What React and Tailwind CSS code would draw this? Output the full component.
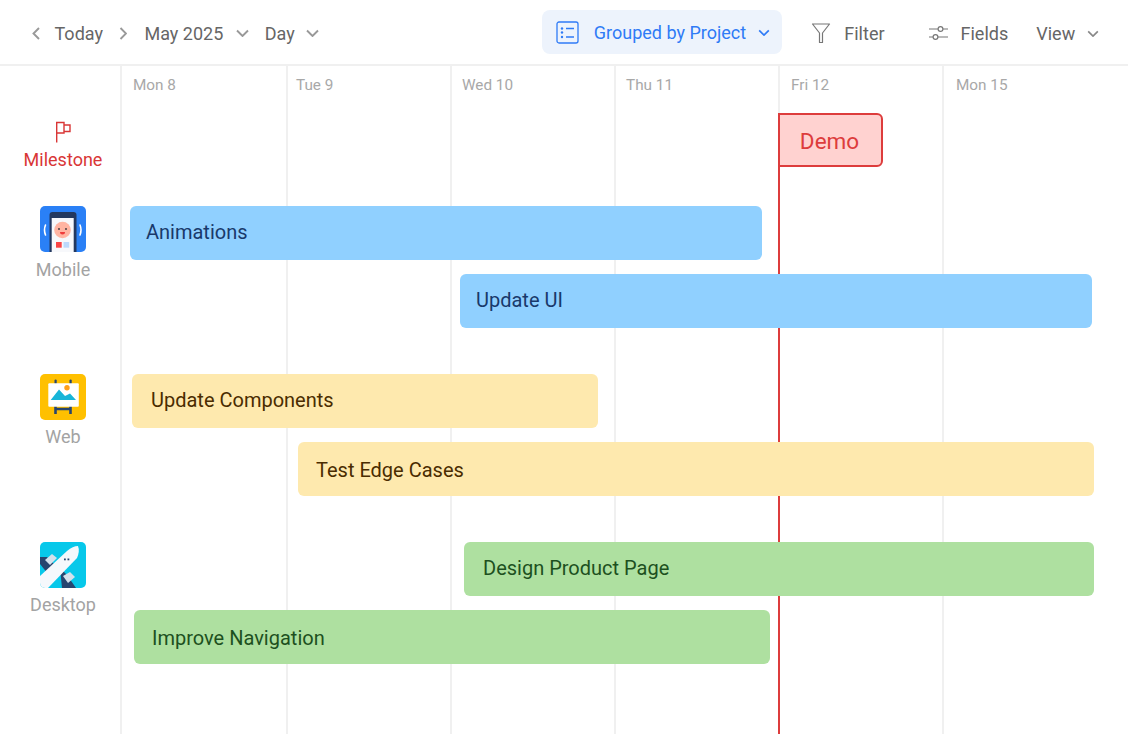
import React from "react"

const DAYS = [
  { label: "Mon 8", width: "w-[166px]", pad: "pl-[11px]" },
  { label: "Tue 9", width: "w-[164px]", pad: "pl-[8px]" },
  { label: "Wed 10", width: "w-[164px]", pad: "pl-[10px]" },
  { label: "Thu 11", width: "w-[164px]", pad: "pl-[10px]" },
  { label: "Fri 12", width: "w-[164px]", pad: "pl-[11px]" },
  { label: "Mon 15", width: "flex-1", pad: "pl-[12px]", last: true },
]

function Chevron({ dir = "down", className = "" }) {
  const paths = {
    down: "M1 1.5 L6.5 7 L12 1.5",
    left: "M7 1 L1.5 6.5 L7 12",
    right: "M1.5 1 L7 6.5 L1.5 12",
  }
  const box = dir === "down" ? "0 0 13 8" : "0 0 8.5 13"
  return (
    <svg viewBox={box} fill="none" stroke="currentColor" strokeWidth="1.9" className={className}>
      <path d={paths[dir]} />
    </svg>
  )
}

function ListIcon() {
  return (
    <svg viewBox="0 0 23 23" fill="none" stroke="#2f7bf6" strokeWidth="1.3" className="w-[23px] h-[23px]">
      <rect x="1" y="1" width="21" height="21" rx="2" />
      <circle cx="6" cy="7.5" r="1.2" fill="#2f7bf6" stroke="none" />
      <circle cx="6" cy="11.5" r="1.2" fill="#2f7bf6" stroke="none" />
      <circle cx="6" cy="16" r="1.2" fill="#2f7bf6" stroke="none" />
      <path d="M10 7.5h8M10 16h8" />
    </svg>
  )
}

function FilterIcon() {
  return (
    <svg viewBox="0 0 20 22" fill="none" stroke="#777" strokeWidth="1.2" className="w-[20px] h-[22px]">
      <path d="M1.5 2 H18.5 L11.5 11 V20.5 H8.5 V11 Z" strokeLinejoin="round" />
    </svg>
  )
}

function FieldsIcon() {
  return (
    <svg viewBox="0 0 21 20" fill="none" stroke="#777" strokeWidth="1.2" className="w-[21px] h-[20px]">
      <path d="M1 6h9M15 6h5M1 14h4M10 14h10" />
      <circle cx="12.5" cy="6" r="2.4" />
      <circle cx="7.5" cy="14" r="2.4" />
    </svg>
  )
}

function FlagIcon() {
  return (
    <svg viewBox="0 0 16 22" fill="none" stroke="#d93636" strokeWidth="1.4" className="w-[16px] h-[22px]">
      <path d="M1.700 21.500 V1.500 H9 V12 H1.700" />
      <path d="M9 4 H15 V10.500 H9" />
    </svg>
  )
}

function MobileIcon() {
  return (
    <svg viewBox="0 0 46 46" className="w-[46px] h-[46px] rounded-[5px]">
      <rect width="46" height="46" fill="#2a80f6" />
      <path d="M9.500 46V9a3 3 0 0 1 3-3h21a3 3 0 0 1 3 3v37Z" fill="#23385f" />
      <rect x="11.700" y="12" width="22" height="34" fill="#f7f8fb" />
      <circle cx="22.500" cy="24" r="8.300" fill="#ffb4a2" />
      <circle cx="19" cy="23" r="0.900" fill="#33333a" />
      <circle cx="26" cy="23" r="0.900" fill="#33333a" />
      <path d="M20 26h5a2.500 2.500 0 0 1-5 0Z" fill="#ef3b3b" />
      <rect x="16" y="36" width="5.700" height="5.700" fill="#f94444" />
      <rect x="23.500" y="36" width="5.700" height="5.700" fill="#bcd9fb" />
      <path d="M5.500 19q-2 5 0 10M40 19q2 5 0 10" fill="none" stroke="#fff" strokeWidth="1.600" strokeLinecap="round" />
    </svg>
  )
}

function WebIcon() {
  return (
    <svg viewBox="0 0 46 46" className="w-[46px] h-[46px] rounded-[5px]">
      <rect width="46" height="46" fill="#ffc000" />
      <path d="M15.500 32v8M30.500 32v8M15.500 35h15" stroke="#27456f" strokeWidth="2.600" fill="none" />
      <rect x="14.500" y="5.500" width="2.200" height="5" rx="1" fill="#27456f" />
      <rect x="29.500" y="5.500" width="2.200" height="5" rx="1" fill="#27456f" />
      <rect x="8.300" y="9.300" width="30.500" height="23.400" rx="1" fill="#fff" />
      <circle cx="27" cy="13.700" r="2.700" fill="#ff9f1a" />
      <path d="M10.700 26L19 15.500L25 22L30 19.500L36 26Z" fill="#18b5d8" />
    </svg>
  )
}

function DesktopIcon() {
  return (
    <svg viewBox="0 0 46 46" className="w-[46px] h-[46px] rounded-[5px]">
      <rect width="46" height="46" fill="#07c8ea" />
      <path d="M0 15H7L18 26L8 32L0 22Z" fill="#27456f" />
      <path d="M20 26L27 33L36 46H22Z" fill="#27456f" />
      <path d="M0 34L27 9Q33 4 38 4Q40 9 37 16L8 46H0Z" fill="#f5f8fc" />
      <path d="M5 18L12 12L17 16L10 23Z" fill="#d5e1ec" />
      <path d="M23 34L30 30L35 35L28 41Z" fill="#d5e1ec" />
      <rect x="24" y="16.500" width="1.800" height="1.800" fill="#27456f" />
      <rect x="27.500" y="16.500" width="1.800" height="1.800" fill="#27456f" />
    </svg>
  )
}

function Toolbar() {
  return (
    <div className="flex items-center h-[66px] pt-[2px] border-b-2 border-[#f0f0f0] text-[18px] text-[#666666] shrink-0">
      <Chevron dir="left" className="w-[8.500px] h-[13px] ml-[32px] text-[#999999]" />
      <span className="ml-[14px]">Today</span>
      <Chevron dir="right" className="w-[8.500px] h-[13px] ml-[16px] text-[#999999]" />
      <span className="ml-[17px]">May 2025</span>
      <Chevron className="w-[13px] h-[8px] ml-[13px] text-[#999999]" />
      <span className="ml-[15.500px]">Day</span>
      <Chevron className="w-[13px] h-[8px] ml-[11.500px] text-[#999999]" />
      <div className="flex items-center h-[44px] w-[240px] ml-[223px] -mt-[2px] pl-[14px] pt-[1px] rounded-lg bg-[#edf3fc] text-[#2f7bf6]">
        <ListIcon />
        <span className="ml-[14.500px]">Grouped by Project</span>
        <Chevron className="w-[12px] h-[7px] ml-[11.500px]" />
      </div>
      <div className="ml-[29px]"><FilterIcon /></div>
      <span className="ml-[13px]">Filter</span>
      <div className="ml-[43px]"><FieldsIcon /></div>
      <span className="ml-[12px]">Fields</span>
      <span className="ml-[28px]">View</span>
      <Chevron className="w-[12px] h-[7px] ml-[12px] text-[#888888]" />
    </div>
  )
}

function GroupLabel({ icon, label, className }) {
  return (
    <div className={`flex flex-col items-center ${className}`}>
      {icon}
      <span className="text-[18px] leading-[22px] text-[#a3a3a3]">{label}</span>
    </div>
  )
}

function Sidebar() {
  return (
    <div className="w-[122px] shrink-0 border-r-2 border-[#f0f0f0] pl-[6px]">
      <div className="flex flex-col items-center mt-[55px]">
        <FlagIcon />
        <span className="text-[18px] leading-[22px] text-[#d93636] mt-[6px]">Milestone</span>
      </div>
      <GroupLabel icon={<MobileIcon />} label="Mobile" className="mt-[35px] gap-[7px]" />
      <GroupLabel icon={<WebIcon />} label="Web" className="mt-[93px] gap-[6px]" />
      <GroupLabel icon={<DesktopIcon />} label="Desktop" className="mt-[94px] gap-[6px]" />
    </div>
  )
}

function Bar({ label, className }) {
  return (
    <div className={`flex items-center h-[54px] shrink-0 rounded-md text-[20px] ${className}`}>
      {label}
    </div>
  )
}

function Timeline() {
  return (
    <div className="relative flex-1 min-w-0">
      {/* grid columns sit behind the bars */}
      <div className="absolute inset-0 flex">
        {DAYS.map(d => (
          <div
            key={d.label}
            className={`${d.width} ${d.pad} ${d.last ? "" : "border-r-2 border-[#f0f0f0]"} pt-[8px] text-[15.300px] leading-[22px] text-[#a8a8a8]`}
          >
            {d.label}
          </div>
        ))}
      </div>

      {/* today marker */}
      <div className="absolute left-[656px] top-[48px] bottom-0 w-[2px] bg-[#dd3c3c]" />

      <div className="relative flex flex-col">
        <div className="flex items-center justify-center ml-[656px] mt-[47px] w-[105px] h-[54px] pt-[3px] pr-[2px] bg-[#ffd2d0] border-2 border-[#dd3c3c] rounded-r-md text-[22.500px] text-[#dd3c3c]">
          Demo
        </div>
        <Bar label="Animations" className="ml-[8px] mt-[39px] w-[632px] pl-[16px] pb-[2px] bg-[#90d0ff] text-[#19396b]" />
        <Bar label="Update UI" className="ml-[338px] mt-[14px] w-[632px] pl-[16px] pb-[2px] bg-[#90d0ff] text-[#19396b]" />
        <Bar label="Update Components" className="ml-[10px] mt-[46px] w-[466px] pl-[19px] pb-[2px] bg-[#fee9ae] text-[#4a2c00]" />
        <Bar label="Test Edge Cases" className="ml-[176px] mt-[14px] w-[796px] pl-[18px] pt-[2px] bg-[#fee9ae] text-[#4a2c00]" />
        <Bar label="Design Product Page" className="ml-[342px] mt-[46px] w-[630px] pl-[19px] pb-[2px] bg-[#aee0a0] text-[#1d5020]" />
        <Bar label="Improve Navigation" className="ml-[12px] mt-[14px] w-[636px] pl-[18px] pt-[2px] bg-[#aee0a0] text-[#1d5020]" />
      </div>
    </div>
  )
}

export default function App() {
  return (
    <div className="flex flex-col h-[734px] w-[1128px] overflow-hidden bg-white font-['Roboto',sans-serif]">
      <Toolbar />
      <div className="flex flex-1 min-h-0">
        <Sidebar />
        <Timeline />
      </div>
    </div>
  )
}
